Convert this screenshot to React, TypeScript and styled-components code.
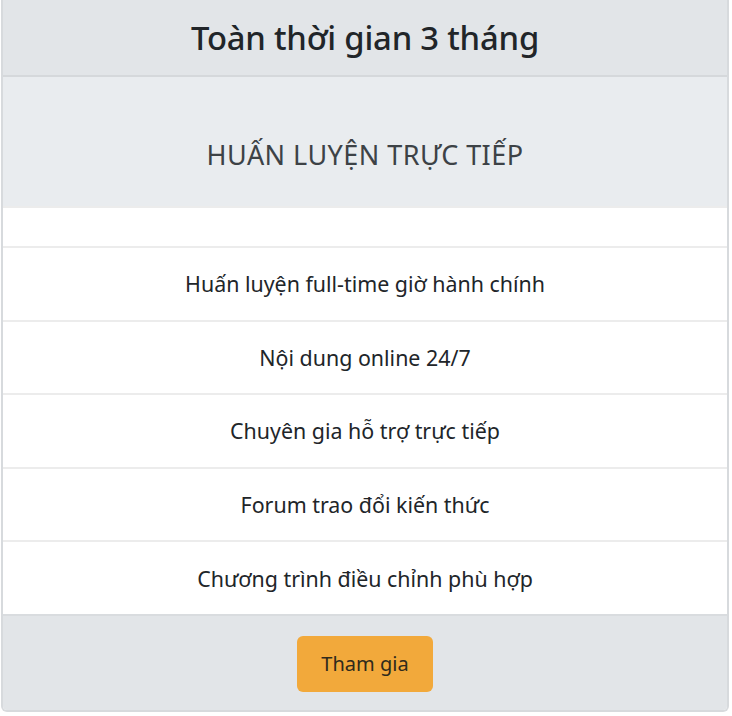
import React from "react";
import styled, { createGlobalStyle } from "styled-components";

const Global = createGlobalStyle`
  html, body { margin: 0; padding: 0; background: #ffffff; }
  body { font-family: "Noto Sans", "Open Sans", sans-serif; }
`;

const Card = styled.div`
  margin-left: 1px;
  width: 728px;
  box-sizing: border-box;
  border: 2px solid #d7dadd;
  border-top: none;
  border-radius: 0 0 6px 6px;
  overflow: hidden;
  display: flex;
  flex-direction: column;
`;

const Header = styled.div`
  height: 75px;
  background: #e2e5e8;
  border-bottom: 2px solid #d5d8db;
  display: flex;
  align-items: center;
  justify-content: center;
`;

const Title = styled.h4`
  margin: 0;
  font-size: 32.8px;
  font-weight: 500;
  color: #212529;
  letter-spacing: -0.2px;
`;

const Section = styled.div`
  height: 129px;
  box-sizing: border-box;
  padding-top: 26px;
  background: #e9ecef;
  display: flex;
  align-items: center;
  justify-content: center;
`;

const Lead = styled.p`
  margin: 0;
  font-size: 27px;
  font-weight: 400;
  color: #3d4246;
  letter-spacing: 0.45px;
`;

const List = styled.ul`
  list-style: none;
  margin: 0;
  padding: 0;
  display: flex;
  flex-direction: column;
`;

const Item = styled.li<{ $h: number }>`
  height: ${(p) => p.$h}px;
  box-sizing: border-box;
  border-top: 2px solid #ececec;
  display: flex;
  align-items: center;
  justify-content: center;
  font-size: 21.4px;
  color: #212529;
  background: #ffffff;
`;

const Footer = styled.div`
  height: 96px;
  box-sizing: border-box;
  border-top: 2px solid #d9dcdf;
  background: #e2e5e8;
  display: flex;
  align-items: center;
  justify-content: center;
  padding-top: 2px;
`;

const Button = styled.button`
  width: 136px;
  height: 56px;
  background: #f2a93b;
  border: none;
  border-radius: 6px;
  font-family: "Noto Sans", "Open Sans", sans-serif;
  font-size: 20px;
  color: #2f2a1c;
  cursor: pointer;
`;

const features = [
  "Huấn luyện full-time giờ hành chính",
  "Nội dung online 24/7",
  "Chuyên gia hỗ trợ trực tiếp",
  "Forum trao đổi kiến thức",
  "Chương trình điều chỉnh phù hợp",
];

export default function App() {
  return (
    <>
      <Global />
      <Card>
        <Header>
          <Title>Toàn thời gian 3 tháng</Title>
        </Header>
        <Section>
          <Lead>HUẤN LUYỆN TRỰC TIẾP</Lead>
        </Section>
        <List>
          <Item $h={40} />
          {features.map((f) => (
            <Item key={f} $h={73.6}>
              {f}
            </Item>
          ))}
        </List>
        <Footer>
          <Button>Tham gia</Button>
        </Footer>
      </Card>
    </>
  );
}
